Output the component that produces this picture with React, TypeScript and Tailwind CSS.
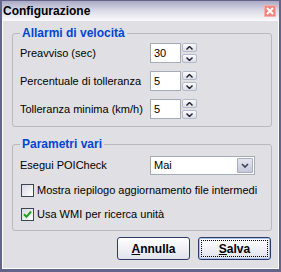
import React from 'react'

const body = "font-['Liberation_Sans',Arial,sans-serif]"

function Spinner() {
  return (
    <div className="ml-[1px] flex h-[20px] flex-col justify-between">
      {['up', 'down'].map((d) => (
        <div
          key={d}
          className="flex h-[9px] w-[15px] items-center justify-center rounded-[2px] border border-[#b4b8c8] bg-gradient-to-b from-[#fbfbfd] to-[#dcdde6]"
        >
          <svg width="7" height="4" viewBox="0 0 7 4">
            {d === 'up' ? (
              <path d="M0.5 3.5 L3.5 0.5 L6.5 3.5" fill="none" stroke="#1a1a2a" strokeWidth="1.4" />
            ) : (
              <path d="M0.5 0.5 L3.5 3.5 L6.5 0.5" fill="none" stroke="#1a1a2a" strokeWidth="1.4" />
            )}
          </svg>
        </div>
      ))}
    </div>
  )
}

function SpinRow({ label, value }: { label: string; value: string }) {
  return (
    <div className="flex h-[20px] items-center">
      <span className="w-[130px] text-[11px] text-black">{label}</span>
      <div className="flex h-[20px] w-[31px] items-center border border-[#a5acb5] bg-white pl-[3px] text-[11px] text-black">
        {value}
      </div>
      <Spinner />
    </div>
  )
}

function Check({ checked, label }: { checked?: boolean; label: string }) {
  return (
    <div className="flex h-[13px] items-center gap-[3px]">
      <div className="flex h-[13px] w-[13px] items-center justify-center border border-[#3d4458] bg-gradient-to-br from-[#d8d8e0] to-white">
        {checked && (
          <svg width="9" height="9" viewBox="0 0 9 9">
            <path d="M1 4.2 L3.5 6.8 L8 1.5" fill="none" stroke="#21a121" strokeWidth="2" />
          </svg>
        )}
      </div>
      <span className="text-[11px] text-black">{label}</span>
    </div>
  )
}

export default function App() {
  return (
    <div className={`${body} flex h-[272px] w-[281px] flex-col border-x-2 border-b-[3px] border-t border-[#64648a] bg-[#e0dfe3]`}>
      <div className="flex h-[20px] items-center justify-between bg-gradient-to-b from-[#a9a9c5] via-[#dcdce8] to-[#fbfbfd] pl-[1px] pr-[3px]">
        <span className="text-[12px] font-bold text-black">Configurazione</span>
        <div className="flex h-[12px] w-[12px] items-center justify-center rounded-[1px] border border-[#f6b0aa] bg-[#ee8580]">
          <svg width="8" height="8" viewBox="0 0 8 8">
            <path d="M1 1 L7 7 M7 1 L1 7" stroke="white" strokeWidth="2" />
          </svg>
        </div>
      </div>
      <div className="flex flex-1 flex-col border-x border-b border-white">
        <fieldset className="ml-[9px] mr-[6px] mt-[6px] rounded-[3px] border border-[#b8b8c0] px-[7px] pb-[7px] pt-[3px]">
          <legend className="px-[2px] text-[12px] font-bold leading-[13px] text-[#0046d5]">Allarmi di velocità</legend>
          <div className="flex flex-col gap-[8px]">
            <SpinRow label="Preavviso (sec)" value="30" />
            <SpinRow label="Percentuale di tolleranza" value="5" />
            <SpinRow label="Tolleranza minima (km/h)" value="5" />
          </div>
        </fieldset>
        <fieldset className="ml-[9px] mr-[6px] mt-[11px] rounded-[3px] border border-[#b8b8c0] px-[7px] pb-[9px] pt-[5px]">
          <legend className="px-[2px] text-[12px] font-bold leading-[13px] text-[#0046d5]">Parametri vari</legend>
          <div className="flex h-[19px] items-center">
            <span className="w-[130px] text-[11px] text-black">Esegui POICheck</span>
            <div className="flex h-[19px] w-[105px] items-center justify-between border border-[#a5acb5] bg-white pl-[3px] pr-[1px]">
              <span className="text-[11px] text-black">Mai</span>
              <div className="flex h-[15px] w-[16px] items-center justify-center rounded-[1px] border border-[#a8acc0] bg-gradient-to-b from-[#e4e6f0] to-[#c4c8d8]">
                <svg width="8" height="5" viewBox="0 0 8 5">
                  <path d="M1 1 L4 4 L7 1" fill="none" stroke="#3a3e52" strokeWidth="1.6" />
                </svg>
              </div>
            </div>
          </div>
          <div className="ml-[1px] mt-[9px]">
            <Check label="Mostra riepilogo aggiornamento file intermedi" />
          </div>
          <div className="ml-[1px] mt-[11px]">
            <Check checked label="Usa WMI per ricerca unità" />
          </div>
        </fieldset>
        <div className="mr-[7px] mt-[6px] flex justify-end gap-[8px]">
          <div className="flex h-[23px] w-[73px] items-center justify-center rounded-[3px] border border-[#2f3a6a] bg-gradient-to-b from-white to-[#e2e2ec] text-[12px] font-bold text-black">
            <span><span className="underline">A</span>nnulla</span>
          </div>
          <div className="flex h-[23px] w-[73px] items-center justify-center rounded-[3px] border border-[#2f3a6a] bg-gradient-to-b from-white to-[#e2e2ec] p-[2px] text-[12px] font-bold text-black shadow-[inset_0_0_0_1px_#a8c4ee]">
            <div className="flex h-full w-full items-center justify-center border border-dotted border-black">
              <span><span className="underline">S</span>alva</span>
            </div>
          </div>
        </div>
      </div>
    </div>
  )
}
